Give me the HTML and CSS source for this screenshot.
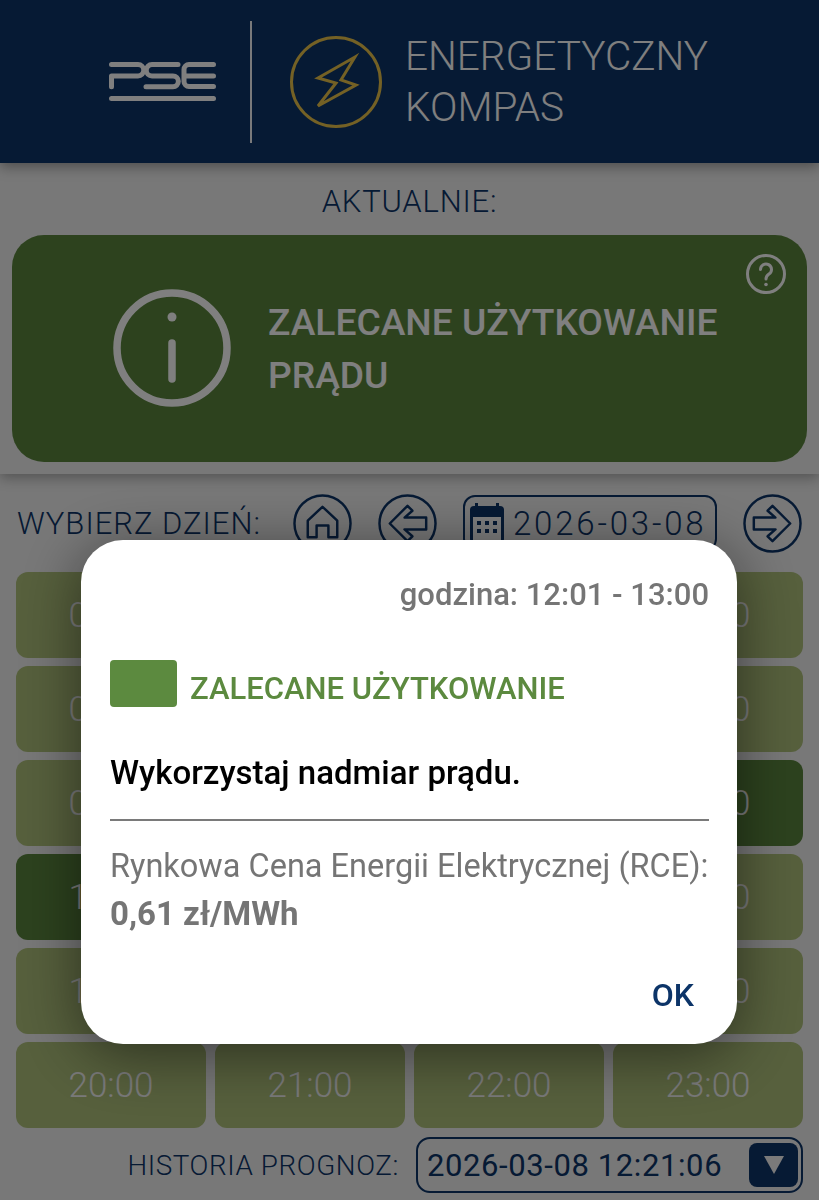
FILE: index.html
```html
<!DOCTYPE html>
<html lang="pl">
<head>
  <meta charset="UTF-8">
  <title>Energetyczny Kompas</title>
  <meta name="viewport" content="width=device-width, initial-scale=1">
  <link rel="stylesheet" href="styles.css">
</head>
<body>

<header class="top-bar">
  <svg class="pse-logo" viewBox="0 0 107 39" fill="none" stroke="#fff" stroke-width="5" stroke-linecap="round" stroke-linejoin="round">
    <path d="M2.5 24.7V14H29a5.7 5.7 0 0 0 0-11.5H2.5"/>
    <path d="M69 2.5H43a5.7 5.7 0 0 0 0 11.5h21a5.3 5.3 0 0 1 0 10.7H37"/>
    <path d="M104.500 2.500H80a5 5 0 0 0-5 5v12a5 5 0 0 0 5 5h24.500M77 14h27.500"/>
    <path d="M2.500 36.500h102"/>
  </svg>
  <div class="top-divider"></div>
  <svg class="bolt-logo" viewBox="0 0 92 92" fill="none" stroke="#e8c24a" stroke-width="3">
    <circle cx="46" cy="46" r="44.500"/>
    <path d="M65 21 28 42l18 5-18 23 38-21-15-5z"/>
  </svg>
  <div class="app-name">ENERGETYCZNY<br>KOMPAS</div>
</header>

<section class="status">
  <div class="status-title">AKTUALNIE:</div>
  <div class="status-card">
    <svg class="info-icon" viewBox="0 0 118 118" fill="none" stroke="#fff" stroke-width="7.500" stroke-linecap="round">
      <circle cx="59" cy="59" r="55"/>
      <path d="M59 54v36"/>
      <circle cx="59" cy="28" r="4.500" fill="#fff" stroke="none"/>
    </svg>
    <div class="status-text">ZALECANE UŻYTKOWANIE<br>PRĄDU</div>
    <svg class="help-icon" viewBox="0 0 40 40" fill="none" stroke="#fff" stroke-width="3" stroke-linecap="round">
      <circle cx="20" cy="20" r="18.500"/>
      <path d="M14.500 15.500a5.500 5.500 0 1 1 8.500 4.600c-2 1.400-3 2.400-3 5"/>
      <circle cx="20" cy="30.500" r="1.800" fill="#fff" stroke="none"/>
    </svg>
  </div>
</section>

<main class="day-view">
  <div class="day-row">
    <span class="day-label">WYBIERZ DZIEŃ:</span>
    <svg class="round-btn" viewBox="0 0 60 60" fill="none" stroke="#0c3468" stroke-width="2.500" stroke-linejoin="round">
      <circle cx="30" cy="30" r="28.500"/>
      <path d="M30 13 45 27v17H36V32H24v12H15V27z"/>
    </svg>
    <svg class="round-btn" viewBox="0 0 60 60" fill="none" stroke="#0c3468" stroke-width="2.500" stroke-linejoin="round">
      <circle cx="30" cy="30" r="28.500"/>
      <path d="M49 24H27l8-7-5-5-18 18 18 18 5-5-8-7h22z"/>
    </svg>
    <div class="date-box">
      <svg class="cal-icon" viewBox="0 0 34 40">
        <rect x="5" y="0" width="3" height="6" fill="#0c3468"/>
        <rect x="26" y="0" width="3" height="6" fill="#0c3468"/>
        <rect x="0" y="3" width="34" height="37" rx="4" fill="#0c3468"/>
        <rect x="3" y="14" width="28" height="23" fill="#fff"/>
        <g fill="#0c3468">
          <rect x="7" y="18" width="4" height="4"/><rect x="15" y="18" width="4" height="4"/><rect x="23" y="18" width="4" height="4"/>
          <rect x="7" y="26" width="4" height="4"/><rect x="15" y="26" width="4" height="4"/><rect x="23" y="26" width="4" height="4"/>
        </g>
      </svg>
      <span>2026-03-08</span>
    </div>
    <svg class="round-btn" viewBox="0 0 60 60" fill="none" stroke="#0c3468" stroke-width="2.500" stroke-linejoin="round">
      <circle cx="30" cy="30" r="28.500"/>
      <path d="M11 24h22l-8-7 5-5 18 18-18 18-5-5 8-7H11z"/>
    </svg>
  </div>

  <div class="hours">
    <div class="hour">00:00</div><div class="hour">01:00</div><div class="hour">02:00</div><div class="hour">03:00</div>
    <div class="hour">04:00</div><div class="hour">05:00</div><div class="hour">06:00</div><div class="hour">07:00</div>
    <div class="hour">08:00</div><div class="hour">09:00</div><div class="hour">10:00</div><div class="hour dark">11:00</div>
    <div class="hour dark">12:00</div><div class="hour">13:00</div><div class="hour">14:00</div><div class="hour">15:00</div>
    <div class="hour">16:00</div><div class="hour">17:00</div><div class="hour">18:00</div><div class="hour">19:00</div>
    <div class="hour">20:00</div><div class="hour">21:00</div><div class="hour">22:00</div><div class="hour">23:00</div>
  </div>

  <div class="history-row">
    <span class="history-label">HISTORIA PROGNOZ:</span>
    <div class="history-select">
      <span>2026-03-08 12:21:06</span>
      <div class="select-arrow"><i></i></div>
    </div>
  </div>
</main>

<div class="overlay">
  <div class="dialog">
    <div class="dialog-hour">godzina: 12:01 - 13:00</div>
    <div class="dialog-level">
      <div class="level-swatch"></div>
      <span>ZALECANE UŻYTKOWANIE</span>
    </div>
    <div class="dialog-message">Wykorzystaj nadmiar prądu.</div>
    <div class="dialog-price">Rynkowa Cena Energii Elektrycznej (RCE):</div>
    <div class="dialog-value">0,61 zł/MWh</div>
    <div class="dialog-ok">OK</div>
  </div>
</div>

</body>
</html>
```

FILE: styles.css
```css
* {
  box-sizing: border-box;
}

body {
  margin: 0;
  width: 819px;
  height: 1200px;
  overflow: hidden;
  font-family: Roboto, "Liberation Sans", sans-serif;
  background: #f0f0f0;
  color: #0c3468;
}

.top-bar {
  position: relative;
  z-index: 2;
  height: 163px;
  padding-left: 109px;
  display: flex;
  align-items: center;
  background: #0c3468;
  box-shadow: 0 4px 12px rgba(0,0,0,0.35);
}

.pse-logo {
  width: 107px;
  height: 39px;
}

.top-divider {
  width: 2px;
  height: 122px;
  margin-left: 34px;
  background: #fff;
  opacity: 0.95;
}

.bolt-logo {
  width: 92px;
  height: 92px;
  margin-left: 38px;
}

.app-name {
  margin-left: 23px;
  font-size: 40.500px;
  font-weight: 300;
  line-height: 51px;
  color: #fff;
}

.status {
  position: relative;
  z-index: 1;
  height: 311px;
  padding: 0 12px;
  background: #f0f0f0;
  box-shadow: 0 4px 12px rgba(0,0,0,0.3);
}

.status-title {
  height: 72px;
  padding-top: 22px;
  text-align: center;
  font-size: 31px;
  font-weight: 300;
  line-height: 34px;
  letter-spacing: 0.800px;
}

.status-card {
  position: relative;
  height: 227px;
  padding-left: 101px;
  display: flex;
  align-items: center;
  border-radius: 32px;
  background: #5a853d;
}

.info-icon {
  width: 118px;
  height: 118px;
  margin-top: -1px;
}

.status-text {
  margin-left: 37px;
  font-size: 37.200px;
  font-weight: 500;
  line-height: 53px;
  color: #fff;
}

.help-icon {
  position: absolute;
  top: 19px;
  right: 21px;
  width: 40px;
  height: 40px;
}

.day-view {
  padding: 20px 16px 0;
}

.day-row {
  display: flex;
  align-items: center;
  height: 58px;
}

.day-label {
  margin-left: 1px;
  width: 276px;
  flex-shrink: 0;
  font-size: 31px;
  font-weight: 300;
  letter-spacing: 1px;
}

.round-btn {
  width: 59px;
  height: 59px;
  margin-right: 26px;
  flex-shrink: 0;
}

.round-btn:last-child {
  margin-right: 0;
}

.date-box {
  width: 254px;
  height: 56px;
  margin-right: 26px;
  padding-left: 5px;
  display: flex;
  align-items: center;
  gap: 9px;
  flex-shrink: 0;
  border: 2px solid #0c3468;
  border-radius: 12px;
  font-size: 33px;
  font-weight: 300;
  letter-spacing: 2.800px;
}

.cal-icon {
  width: 34px;
  height: 40px;
  flex-shrink: 0;
}

.hours {
  margin-top: 20px;
  display: grid;
  grid-template-columns: repeat(4, 190px);
  grid-auto-rows: 86px;
  gap: 8px 9px;
}

.hour {
  display: flex;
  align-items: center;
  justify-content: center;
  border-radius: 12px;
  background: #aec07a;
  color: #f4f4f4;
  font-size: 35px;
  font-weight: 300;
}

.hour.dark {
  background: #5a853d;
}

.history-row {
  margin-top: 9px;
  display: flex;
  align-items: center;
  justify-content: flex-end;
}

.history-label {
  margin-right: 17px;
  font-size: 27.800px;
  font-weight: 300;
  letter-spacing: 0.600px;
}

.history-select {
  width: 387px;
  height: 56px;
  padding: 0 3px 0 9px;
  display: flex;
  align-items: center;
  justify-content: space-between;
  border: 2px solid #0c3468;
  border-radius: 14px;
  font-size: 31px;
  letter-spacing: 0.600px;
}

.select-arrow {
  width: 49px;
  height: 44px;
  display: flex;
  align-items: center;
  justify-content: center;
  border-radius: 8px;
  background: #0c3468;
}

.select-arrow i {
  width: 0;
  height: 0;
  border-left: 10px solid transparent;
  border-right: 10px solid transparent;
  border-top: 18px solid #f4f4f4;
}

/* modal nad strona */
.overlay {
  position: fixed;
  inset: 0;
  z-index: 5;
  background: rgba(0,0,0,0.5);
}

.dialog {
  position: absolute;
  left: 81px;
  top: 540px;
  width: 656px;
  height: 504px;
  padding: 36px 28px 0 29px;
  border-radius: 42px;
  background: #fff;
  box-shadow: 0 10px 60px rgba(0,0,0,0.5);
}

.dialog-hour {
  text-align: right;
  font-size: 31px;
  font-weight: 500;
  line-height: 38px;
  color: #757575;
}

.dialog-level {
  margin-top: 46px;
  display: flex;
  align-items: flex-end;
  gap: 13px;
  font-size: 31px;
  font-weight: 500;
  line-height: 37px;
  color: #5c8a3f;
}

.level-swatch {
  width: 67px;
  height: 47px;
  border-radius: 4px;
  background: #5c8a3f;
}

.dialog-message {
  margin-top: 46px;
  padding-bottom: 26px;
  border-bottom: 2px solid #7a7a7a;
  font-size: 33px;
  font-weight: 500;
  line-height: 40px;
  color: #000;
}

.dialog-price {
  margin-top: 25px;
  font-size: 32.500px;
  line-height: 40px;
  white-space: nowrap;
  color: #757575;
}

.dialog-value {
  margin-top: 8px;
  font-size: 33px;
  font-weight: 700;
  line-height: 40px;
  color: #757575;
}

.dialog-ok {
  position: absolute;
  right: 43px;
  top: 436px;
  font-size: 32px;
  font-weight: 500;
  line-height: 38px;
  color: #0c3468;
}
```
